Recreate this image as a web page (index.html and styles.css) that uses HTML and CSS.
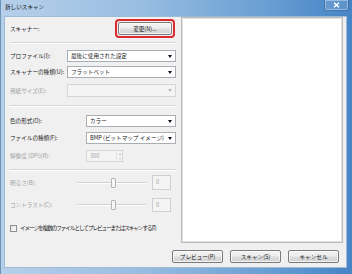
FILE: index.html
```html
<!DOCTYPE html>
<html lang="ja">
<head>
    <meta charset="UTF-8">
    <meta name="viewport" content="width=device-width, initial-scale=1.0">
    <title>新しいスキャン</title>
    <link rel="stylesheet" href="styles.css">
</head>
<body>
    <div class="window">
        <div class="titlebar">
            <span class="title">新しいスキャン</span>
            <button class="close">
                <svg width="7" height="6" viewBox="0 0 7 6"><path d="M1 0.8 L6 5.2 M6 0.8 L1 5.2" stroke="#fff" stroke-width="1.5"/></svg>
            </button>
        </div>
        <div class="client">
            <div class="main">
                <div class="settings">
                    <div class="row row-scanner">
                        <span class="label">スキャナー:</span>
                        <span class="highlight"><button class="btn btn-change">変更(N)...</button></span>
                    </div>
                    <div class="sep sep-top"></div>

                    <div class="row w1 row-profile">
                        <span class="label">プロファイル(I):</span>
                        <div class="combo"><span>最後に使用された設定</span><i class="arrow"></i></div>
                    </div>
                    <div class="row w1 row-type">
                        <span class="label">スキャナーの種類(U):</span>
                        <div class="combo"><span>フラットベット</span><i class="arrow"></i></div>
                    </div>
                    <div class="row w1 row-paper">
                        <span class="label dis">用紙サイズ(E):</span>
                        <div class="combo disabled"><span></span><i class="arrow"></i></div>
                    </div>
                    <div class="sep sep-mid"></div>

                    <div class="row w2 row-color">
                        <span class="label">色の形式(O):</span>
                        <div class="combo"><span>カラー</span><i class="arrow"></i></div>
                    </div>
                    <div class="row w2 row-file">
                        <span class="label">ファイルの種類(F):</span>
                        <div class="combo"><span>BMP (ビットマップ イメージ)</span><i class="arrow"></i></div>
                    </div>
                    <div class="row w2 row-dpi">
                        <span class="label dis">解像度 (DPI)(R):</span>
                        <div class="spinner">
                            <span>300</span>
                            <span class="spin"><i class="up"></i><i class="down"></i></span>
                        </div>
                    </div>
                    <div class="sep sep-low"></div>

                    <div class="row w3 row-bright">
                        <span class="label dis">明るさ(B):</span>
                        <div class="slider"><span class="track"></span><span class="thumb"></span></div>
                        <div class="numbox">0</div>
                    </div>
                    <div class="row w3 row-contrast">
                        <span class="label dis">コントラスト(C):</span>
                        <div class="slider"><span class="track"></span><span class="thumb"></span></div>
                        <div class="numbox">0</div>
                    </div>

                    <label class="check-row">
                        <span class="checkbox"></span>
                        <span class="check-text">イメージを複数のファイルとしてプレビューまたはスキャンする(T)</span>
                    </label>
                </div>
                <div class="preview"></div>
            </div>
            <div class="footer">
                <button class="btn">プレビュー(P)</button>
                <button class="btn">スキャン(S)</button>
                <button class="btn">キャンセル</button>
            </div>
        </div>
    </div>
</body>
</html>
```

FILE: styles.css
```css
* {
    box-sizing: border-box;
}
body {
    margin: 0;
    font-family: "Noto Sans CJK JP", "Liberation Sans", sans-serif;
    font-size: 5.6px;
    color: #222;
}
.window {
    width: 352px;
    height: 274px;
    display: flex;
    flex-direction: column;
    background: linear-gradient(to right, #b6d0ea 0%, #98bde1 40%, #6a9fd3 75%, #4584c6 100%);
    border-left: 1px solid #6b94bb;
}
.titlebar {
    height: 16px;
    display: flex;
    justify-content: space-between;
    padding-left: 4px;
}
.title {
    line-height: 14px;
    color: #111;
}
.close {
    width: 25px;
    height: 11px;
    margin-right: 3px;
    padding: 0;
    border: 1px solid rgba(40, 80, 130, 0.5);
    border-top: none;
    border-radius: 0 0 3px 3px;
    background: rgba(255, 255, 255, 0.12);
    box-shadow: inset 0 0 0 1px rgba(255, 255, 255, 0.35);
    display: flex;
    align-items: center;
    justify-content: center;
}
.client {
    flex: 1;
    margin: 0 5px 6px 3px;
    background: #f0f0f0;
    border: 1px solid #9fbad6;
    display: flex;
    flex-direction: column;
}
.main {
    height: 226px;
    display: flex;
    gap: 5px;
    padding: 0 3px 0 5px;
}
.settings {
    width: 166px;
    flex-shrink: 0;
    display: flex;
    flex-direction: column;
}
.preview {
    flex: 1;
    background: #fff;
    border: 1px solid #bcbcbc;
    box-shadow: inset 0 0 0 1px #e2e2e2;
}
.row {
    display: flex;
    align-items: center;
}
.label {
    white-space: nowrap;
}
.dis {
    color: #a3a3a3;
}
.w1 .label {
    width: 57px;
}
.w2 .label {
    width: 76px;
}
.w3 .label {
    width: 67px;
}
.row-scanner {
    margin-top: 1px;
    height: 21px;
    justify-content: space-between;
}
.highlight {
    width: 60px;
    height: 19px;
    margin-right: 1px;
    padding: 1px;
    border: 2px solid #dd2a2f;
    border-radius: 4px;
    display: flex;
}
.btn {
    width: 51px;
    height: 13px;
    padding: 0;
    font-family: inherit;
    font-size: 5.6px;
    color: #222;
    border: 1px solid #7a7a7a;
    border-radius: 2px;
    background: linear-gradient(#f3f3f3 0%, #ececec 48%, #dddddd 52%, #d2d2d2 100%);
    box-shadow: inset 0 0 0 1px rgba(255, 255, 255, 0.7);
}
.btn-change {
    width: 100%;
    height: 100%;
}
.sep {
    height: 2px;
    border-top: 1px solid #d5d5d5;
    border-bottom: 1px solid #fff;
}
.sep-top {
    margin-top: 3px;
}
.sep-mid {
    margin-top: 8px;
}
.sep-low {
    margin-top: 7px;
}
.row-profile {
    margin-top: 6px;
}
.row-type {
    margin-top: 4px;
}
.row-paper {
    margin-top: 6px;
}
.row-color {
    margin-top: 8px;
}
.row-file {
    margin-top: 5px;
}
.row-dpi {
    margin-top: 6px;
}
.row-bright {
    margin-top: 4px;
}
.row-contrast {
    margin-top: 8px;
}
.combo {
    flex: 1;
    height: 12px;
    padding: 0 3px 0 3px;
    background: #fff;
    border: 1px solid #a9aeb5;
    display: flex;
    align-items: center;
    justify-content: space-between;
    white-space: nowrap;
}
.row-paper .combo {
    height: 13px;
}
.combo.disabled {
    background: #f4f4f4;
    border-color: #d6d6d6;
}
.arrow {
    width: 0;
    height: 0;
    border-left: 2.5px solid transparent;
    border-right: 2.5px solid transparent;
    border-top: 3px solid #111;
}
.disabled .arrow {
    border-top-color: #b8b8b8;
}
.spinner {
    width: 37px;
    height: 12px;
    padding-left: 3px;
    background: #f4f4f4;
    border: 1px solid #d6d6d6;
    color: #a3a3a3;
    display: flex;
    align-items: center;
    justify-content: space-between;
}
.spin {
    width: 6px;
    height: 100%;
    border-left: 1px solid #e2e2e2;
    display: flex;
    flex-direction: column;
    align-items: center;
    justify-content: space-around;
}
.spin i {
    width: 0;
    height: 0;
    border-left: 1.5px solid transparent;
    border-right: 1.5px solid transparent;
}
.spin .up {
    border-bottom: 2px solid #bdbdbd;
}
.spin .down {
    border-top: 2px solid #bdbdbd;
}
.slider {
    width: 69px;
    height: 12px;
    position: relative;
    display: flex;
    align-items: center;
}
.track {
    width: 100%;
    height: 2px;
    border-top: 1px solid #d2d2d2;
    border-bottom: 1px solid #fff;
}
.thumb {
    position: absolute;
    left: 34px;
    top: 1px;
    width: 5px;
    height: 10px;
    border: 1px solid #b5b5b5;
    border-radius: 1px;
    background: #f6f6f6;
}
.numbox {
    width: 19px;
    height: 14px;
    margin-left: 6px;
    padding-left: 3px;
    line-height: 12px;
    background: #f4f4f4;
    border: 1px solid #cfcfcf;
    color: #a3a3a3;
}
.row-bright .numbox {
    height: 15px;
    line-height: 13px;
}
.check-row {
    margin-top: 12px;
    display: flex;
    align-items: center;
    gap: 3px;
    white-space: nowrap;
}
.checkbox {
    flex-shrink: 0;
    width: 7px;
    height: 7px;
    border: 1px solid #8e8f8f;
    background: linear-gradient(135deg, #e4e4e4, #fbfbfb);
}
.check-text {
    letter-spacing: -1.05px;
}
.footer {
    display: flex;
    justify-content: flex-end;
    gap: 7px;
    padding: 7px 7px 0 0;
}
```
